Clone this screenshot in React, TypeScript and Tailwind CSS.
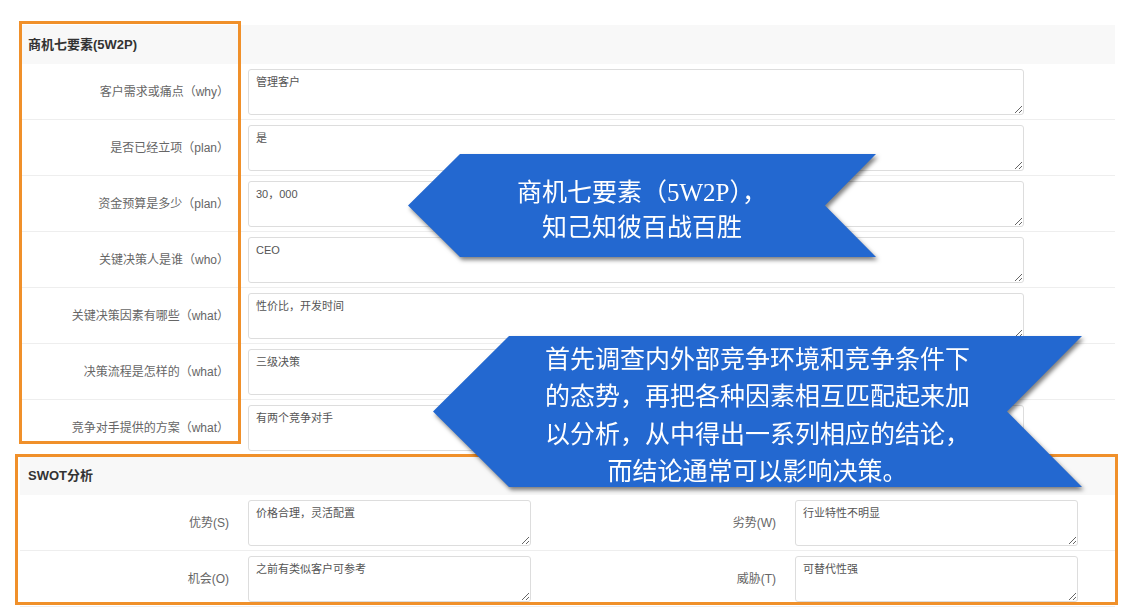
import React from 'react';

const rows = [
  { label: '客户需求或痛点（why）', value: '管理客户' },
  { label: '是否已经立项（plan）', value: '是' },
  { label: '资金预算是多少（plan）', value: '30，000' },
  { label: '关键决策人是谁（who）', value: 'CEO' },
  { label: '关键决策因素有哪些（what）', value: '性价比，开发时间' },
  { label: '决策流程是怎样的（what）', value: '三级决策' },
  { label: '竞争对手提供的方案（what）', value: '有两个竞争对手' },
];

const swot = [
  [
    { label: '优势(S)', value: '价格合理，灵活配置' },
    { label: '劣势(W)', value: '行业特性不明显' },
  ],
  [
    { label: '机会(O)', value: '之前有类似客户可参考' },
    { label: '威胁(T)', value: '可替代性强' },
  ],
];

const font = 'font-["Liberation_Sans","Noto_Sans_CJK_SC",sans-serif]';

function Field({ value, wide }: { value: string; wide?: boolean }) {
  return (
    <textarea
      readOnly
      defaultValue={value}
      className={`block h-[46px] ${wide ? 'w-[776px]' : 'w-[283px]'} rounded-[3px] border border-[#ddd] bg-white px-[7px] pt-[4px] text-[11px] leading-[16px] text-[#555] outline-none ${font}`}
    />
  );
}

function Label({ text }: { text: string }) {
  return (
    <div className="flex w-[220px] shrink-0 items-center justify-end pr-[11px] text-[12px] text-[#666]">
      {text}
    </div>
  );
}

export default function App() {
  return (
    <div className={`relative h-[613px] w-[1139px] overflow-hidden bg-white ${font}`}>
      <div className="pl-[20px] pt-[25px] w-[1115px]">
        {/* 5W2P section */}
        <div className="flex h-[39px] items-center bg-[#f8f8f8] pl-2 text-[13px] font-bold text-[#333]">
          商机七要素(5W2P)
        </div>
        {rows.map((r) => (
          <div key={r.label} className="flex h-[56px] border-b border-[#eee]">
            <Label text={r.label} />
            <div className="pl-2 pt-[5px]">
              <Field value={r.value} wide />
            </div>
          </div>
        ))}

        {/* SWOT section */}
        <div className="flex h-[39px] items-center bg-[#f8f8f8] pl-2 text-[13px] font-bold text-[#333]">
          SWOT分析
        </div>
        {swot.map((pair, i) => (
          <div key={i} className="flex h-[56px] border-b border-[#eee]">
            {pair.map((c) => (
              <div key={c.label} className="flex w-[547px]">
                <Label text={c.label} />
                <div className="pl-2 pt-[5px]">
                  <Field value={c.value} />
                </div>
              </div>
            ))}
          </div>
        ))}
      </div>

      {/* annotation boxes */}
      <div className="absolute left-[19px] top-[21px] h-[423px] w-[222px] border-[3px] border-[#f0902a]" />
      <div className="absolute left-[15px] top-[454px] h-[151px] w-[1103px] border-[3px] border-[#f0902a]" />

      {/* callout arrows */}
      <div className="absolute left-[408px] top-[154px] drop-shadow-[2px_3px_2px_rgba(0,0,0,0.5)]">
        <div className="flex h-[103px] w-[468px] items-center justify-center bg-[#2368d0] pt-2 [clip-path:polygon(52px_0,468px_0,417px_51.5px,468px_103px,52px_103px,0_51.5px)]">
          <div className='text-center text-[25px] leading-[35px] text-white font-["Liberation_Serif","Noto_Sans_CJK_SC",serif]'>
            商机七要素（5W2P），
            <br />
            知己知彼百战百胜
          </div>
        </div>
      </div>

      <div className="absolute left-[433px] top-[336px] drop-shadow-[2px_3px_2px_rgba(0,0,0,0.5)]">
        <div className="flex h-[151px] w-[649px] items-center justify-center bg-[#2368d0] pt-1 [clip-path:polygon(76px_0,649px_0,574px_75.5px,649px_151px,76px_151px,0_75.5px)]">
          <div className='text-center text-[25px] leading-[37.5px] text-white font-["Noto_Sans_CJK_SC",sans-serif]'>
            首先调查内外部竞争环境和竞争条件下
            <br />
            的态势，再把各种因素相互匹配起来加
            <br />
            以分析，从中得出一系列相应的结论，
            <br />
            而结论通常可以影响决策。
          </div>
        </div>
      </div>
    </div>
  );
}
